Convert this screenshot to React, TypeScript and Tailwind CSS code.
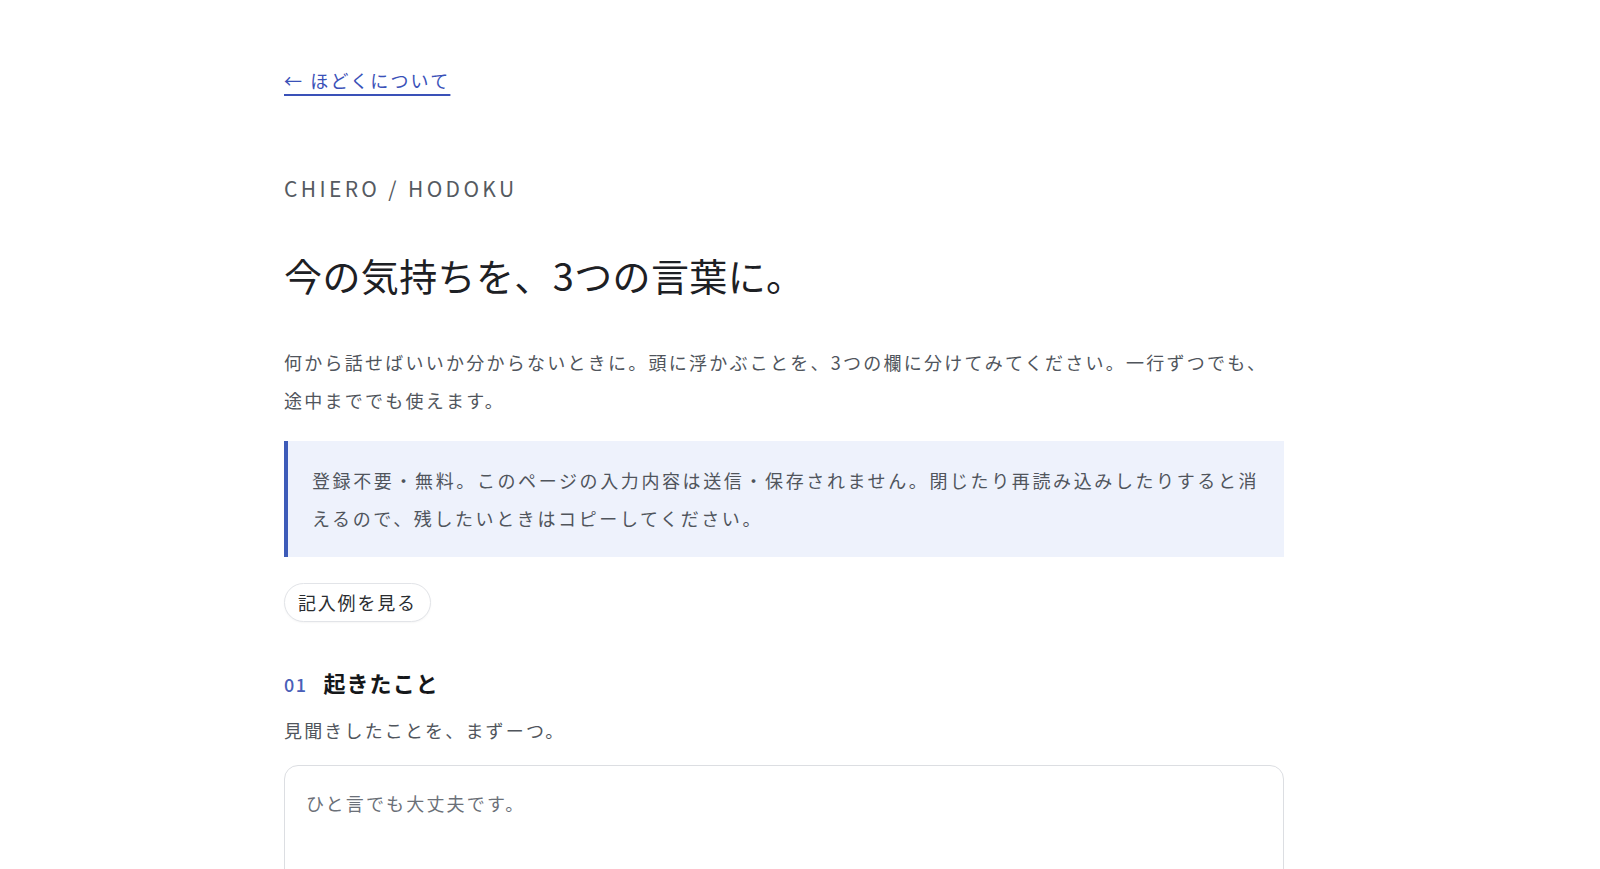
import React, { useState } from "react";

const jp = "font-['Noto_Sans_CJK_JP','Noto_Sans',sans-serif]";

const App = () => {
  const [text, setText] = useState("");

  return (
    <div className={`min-h-screen bg-white pr-8 ${jp}`}>
      <main className="mx-auto max-w-[1000px] pt-[66px] pb-16">
        {/* Back link */}
        <a
          href="#"
          className="inline-block text-[18px] leading-[28px] tracking-[0.12em] text-[#3a51b8] underline decoration-[1.5px] underline-offset-[6px]"
        >
          ← ほどくについて
        </a>

        {/* Eyebrow */}
        <p className="mt-[80px] text-[21px] leading-[28px] tracking-[0.16em] text-[#555a61]">
          CHIERO / HODOKU
        </p>

        <h1 className="mt-[48px] text-[38px] leading-[50px] tracking-[0.01em] text-[#1d2024]">
          今の気持ちを、3つの言葉に。
        </h1>

        <p className="mt-[43px] text-[18px] leading-[38px] tracking-[0.125em] text-[#50555c]">
          何から話せばいいか分からないときに。頭に浮かぶことを、3つの欄に分けてみてください。一行ずつでも、途中まででも使えます。
        </p>

        {/* Notice */}
        <div className="mt-[22px] border-l-4 border-[#3d5bb8] bg-[#eef2fc] py-5 pl-6 pr-6">
          <p className="text-[18px] leading-[38px] tracking-[0.145em] text-[#50555c]">
            登録不要・無料。このページの入力内容は送信・保存されません。閉じたり再読み込みしたりすると消えるので、残したいときはコピーしてください。
          </p>
        </div>

        <button className="mt-[26px] h-[39px] rounded-full border border-[#e2e4e8] bg-white px-[13px] text-[18px] tracking-[0.1em] text-[#2a2d31] shadow-[0_1px_2px_rgba(0,0,0,0.04)]">
          記入例を見る
        </button>

        {/* Step 01 */}
        <section className="mt-[44px]">
          <h2 className="flex items-baseline gap-[16px] leading-[32px]">
            <span className="text-[18px] font-medium tracking-[0.08em] text-[#4a5fb8]">01</span>
            <span className="text-[22px] font-bold tracking-[0.05em] text-[#15171a]">起きたこと</span>
          </h2>
          <p className="mt-[14px] text-[18px] leading-[32px] tracking-[0.12em] text-[#50555c]">
            見聞きしたことを、まずーつ。
          </p>
          <textarea
            value={text}
            onChange={(e) => setText(e.target.value)}
            placeholder="ひと言でも大丈夫です。"
            rows={4}
            className="mt-[19px] block w-full resize-none rounded-[14px] border border-[#dcdee2] bg-white px-[21px] py-[18px] text-[18px] leading-[38px] tracking-[0.12em] text-[#2a2d31] placeholder:text-[#6b7078] focus:outline-none"
          />
        </section>
      </main>
    </div>
  );
};

export default App;
